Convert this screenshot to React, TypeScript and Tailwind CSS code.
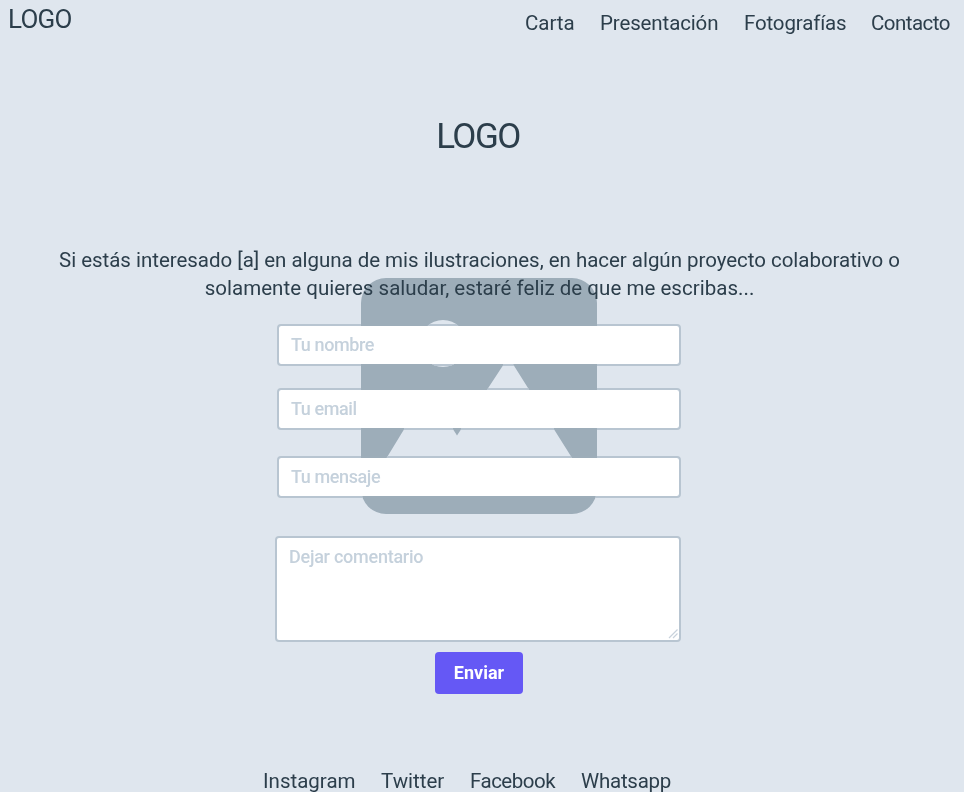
import React from "react";

const navItems = [
  { label: "Carta", cls: "w-[49px] tracking-[-0.05px]" },
  { label: "Presentación", cls: "w-[118px] tracking-[-0.13px]" },
  { label: "Fotografías", cls: "w-[101px] tracking-[-0.15px]" },
  { label: "Contacto", cls: "w-[79px] tracking-[-0.52px]" },
];

const socialItems = [
  { label: "Instagram", cls: "w-[93px] tracking-[0px]" },
  { label: "Twitter", cls: "w-[64px] tracking-[0px]" },
  { label: "Facebook", cls: "w-[86px] tracking-[-0.5px]" },
  { label: "Whatsapp", cls: "w-[91px] tracking-[-0.25px]" },
];

function PictureIcon() {
  return (
    <svg className="absolute left-[361px] top-[278px] h-[236px] w-[236px]" viewBox="361 278 236 236">
      <rect x="361" y="278" width="236" height="236" rx="25" fill="#9dadb9" />
      <circle cx="443" cy="343.5" r="23.5" fill="#dfe6ee" />
      <path d="M375 477L428 390L457 435.500L508.500 357L584 477Z" fill="#dfe6ee" />
    </svg>
  );
}

function Field({ placeholder, className = "" }: { placeholder: string; className?: string }) {
  return (
    <div className={`relative h-[42px] w-[404px] ${className}`}>
      <input
        className="block h-full w-full rounded-[4px] border-2 border-transparent bg-white bg-clip-padding px-3 pb-0.5 text-[18px] font-medium tracking-[-0.4px] outline-none placeholder:text-[#c5d1dc]"
        placeholder={placeholder}
      />
      <span className="pointer-events-none absolute inset-0 rounded-[4px] border-2 border-[#b8c5d1] mix-blend-darken" />
    </div>
  );
}

export default function App() {
  return (
    <div className="relative h-[792px] w-[964px] overflow-hidden bg-[#dfe6ee] font-[Roboto,sans-serif] text-[#2c3e4b]">
      <PictureIcon />
      <div className="relative flex flex-col">
        <header className="flex h-[43px] justify-between pl-2 pr-[14px]">
          <div className="pt-[3px] text-[26px] leading-8 tracking-[-0.8px]">LOGO</div>
          <nav className="flex gap-[26px] pt-[9px] text-[20.5px] leading-7">
            {navItems.map((n) => (
              <a key={n.label} className={`whitespace-nowrap ${n.cls}`}>{n.label}</a>
            ))}
          </nav>
        </header>
        <h1 className="mt-[70px] pr-[8px] text-center text-[35px] leading-[48px] tracking-[-1.5px]">LOGO</h1>
        <p className="mt-[85px] pr-[5px] text-center text-[20.5px] leading-7 tracking-[-0.03px]">
          Si estás interesado [a] en alguna de mis ilustraciones, en hacer algún proyecto colaborativo o
          <br />
          <span className="tracking-[0.03px]">solamente quieres saludar, estaré feliz de que me escribas...</span>
        </p>
        <form className="ml-[277px] mt-[22px] flex flex-col">
          <Field placeholder="Tu nombre" />
          <Field placeholder="Tu email" className="mt-[22px]" />
          <Field placeholder="Tu mensaje" className="mt-[26px]" />
          <textarea
            className="-ml-0.5 mt-[38px] block h-[106px] w-[406px] resize-none rounded-[4px] border-2 border-[#b8c5d1] bg-white px-3 py-[5px] text-[18px] font-medium leading-7 tracking-[-0.25px] outline-none placeholder:text-[#c5d1dc]"
            placeholder="Dejar comentario"
          />
          <button type="button" className="ml-[158px] mt-[10px] h-[42px] w-[88px] rounded-[4px] bg-[#6558f5] pb-0.5 text-[18px] font-bold text-white">
            Enviar
          </button>
        </form>
        <footer className="ml-[263px] mt-[73px] flex gap-[25px] text-[20.5px] leading-7">
          {socialItems.map((s) => (
            <a key={s.label} className={`whitespace-nowrap ${s.cls}`}>{s.label}</a>
          ))}
        </footer>
      </div>
      <svg className="absolute left-[668px] top-[628px] h-3 w-3" viewBox="0 0 12 12" fill="none" stroke="#c8d2dc" strokeWidth="1.200">
        <path d="M1 10L9.500 1.500M5 10L9.500 5.500" />
      </svg>
    </div>
  );
}
